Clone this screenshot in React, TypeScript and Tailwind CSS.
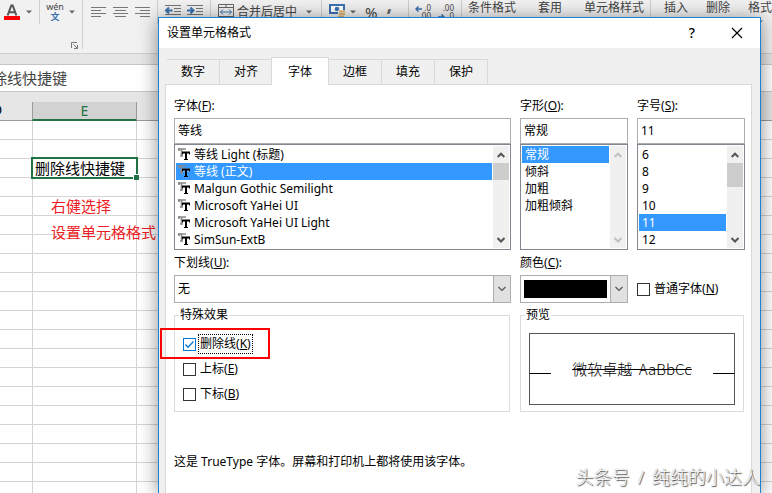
import React, { useState } from 'react';

const SHEET_ROWS = Array.from({ length: 20 }, (_, i) => i);
const TABS = ['数字', '对齐', '字体', '边框', '填充', '保护'];
const FONTS = [
  '等线 Light (标题)',
  '等线 (正文)',
  'Malgun Gothic Semilight',
  'Microsoft YaHei UI',
  'Microsoft YaHei UI Light',
  'SimSun-ExtB',
];
const STYLES = ['常规', '倾斜', '加粗', '加粗倾斜'];
const SIZES = ['6', '8', '9', '10', '11', '12'];

/* ---------- Ribbon icons ---------- */

const Caret = () => (
  <svg width="6" height="4" viewBox="0 0 6 4" className="shrink-0">
    <path d="M0 0.5h6L3 3.5z" fill="#666" />
  </svg>
);

const FontColorIcon = () => (
  <svg width="16" height="16" viewBox="0 0 16 16" className="shrink-0">
    <path d="M3.6 11.5 7.3 1.5h1.4l3.7 10M5 8.2h6" fill="none" stroke="#555" strokeWidth="2" />
    <rect y="12" width="16" height="4" fill="#f00" />
  </svg>
);

const PhoneticIcon = () => (
  <span className="flex w-4 shrink-0 flex-col items-center">
    <span className="text-[9px] leading-[10px] text-[#444]">wén</span>
    <span className="text-[9px] leading-[10px] font-bold text-[#3a72b0]">文</span>
  </span>
);

const AlignIcon = ({ short }: { short: 'left' | 'center' | 'right' }) => {
  const x = short === 'left' ? 0 : short === 'center' ? 2 : 5;
  const w = short === 'center' ? 11 : 10;
  return (
    <svg width="15" height="10" viewBox="0 0 15 10" className="shrink-0" fill="#777">
      <rect width="15" height="1" />
      <rect x={x} y="3" width={w} height="1" />
      <rect y="6" width="15" height="1" />
      <rect x={x} y="9" width={w} height="1" />
    </svg>
  );
};

const IndentIcon = ({ increase }: { increase?: boolean }) => (
  <svg width="16" height="12" viewBox="0 0 16 12" className="shrink-0">
    <path d="M0 .5h16M9 3.5h7M9 6.5h7M0 9.5h16" stroke="#777" />
    <path
      d={increase ? 'M0 5.5h6M3.5 2.5l3 3-3 3' : 'M1 5.5h6.5M4 2.5l-3 3 3 3'}
      fill="none"
      stroke="#3a72b0"
      strokeWidth="2"
    />
  </svg>
);

const MergeIcon = () => (
  <svg width="16" height="16" viewBox="0 0 16 16" className="shrink-0" fill="none">
    <path d="M.5.5h15v15H.5zM.5 3.5h15M.5 12.5h15M8 .5v3M8 12.5v3" stroke="#666" />
    <path d="M2.5 8h11M5 5.5 2.5 8 5 10.5M11 5.5 13.5 8 11 10.5" stroke="#3a72b0" />
  </svg>
);

const CurrencyIcon = () => (
  <svg width="16" height="16" viewBox="0 0 16 16" className="shrink-0">
    <rect x="1" y="1" width="14" height="8" fill="#fff" stroke="#3a72b0" strokeWidth="2" />
    <circle cx="8" cy="5" r="2.3" fill="#3a72b0" />
    <rect x="9" y="6" width="7" height="10" rx="1" fill="#f1f1f1" />
    <path d="M10 7.5h6M10 10h6M9 12.5h6M5 14.5h9" stroke="#e0b270" strokeWidth="1.8" />
  </svg>
);

const DecimalIcon = ({ decrease }: { decrease?: boolean }) => (
  <span className="relative flex w-4 shrink-0 flex-col items-end text-[8px] leading-[8px] text-[#444]">
    <span>{decrease ? '.00' : '.0'}</span>
    <span>{decrease ? '.0' : '.00'}</span>
    <svg
      width="7"
      height="6"
      viewBox="0 0 7 6"
      className={decrease ? 'absolute bottom-0 left-0' : 'absolute top-0.5 left-0'}
      fill="none"
      stroke="#3a72b0"
      strokeWidth="1.5"
    >
      <path d={decrease ? 'M0 3h6M3.5.5 6 3 3.5 5.5' : 'M1 3h6M3.5.5 1 3l2.5 2.5'} />
    </svg>
  </span>
);

const LauncherIcon = () => (
  <svg width="7" height="7" viewBox="0 0 7 7" fill="none" stroke="#777">
    <path d="M.5 6V.5H6M2.5 2.5 6 6M6.5 3v3.5H3" />
  </svg>
);

/* ---------- Spreadsheet in the background ---------- */

const Ribbon = () => (
  <div className="flex h-[54px] items-start overflow-hidden border-b border-[#cfcfcf] bg-[#f1f1f1] text-[12px] leading-4 whitespace-nowrap text-[#444]">
    <div className="flex h-[49px] w-[83px] shrink-0 flex-col justify-between border-r border-[#cfcfcf]">
      <div className="flex h-6">
        <div className="flex w-10 shrink-0 items-center gap-1.5 border-r border-[#cfcfcf] pl-1">
          <FontColorIcon />
          <Caret />
        </div>
        <div className="flex items-center gap-1.5 pl-[7px]">
          <PhoneticIcon />
          <Caret />
        </div>
      </div>
      <div className="self-end pr-1">
        <LauncherIcon />
      </div>
    </div>
    <div className="flex h-6 w-[75px] shrink-0 items-center gap-[7px] border-r border-[#cfcfcf] pl-2">
      <AlignIcon short="left" />
      <AlignIcon short="center" />
      <AlignIcon short="right" />
    </div>
    <div className="flex h-[22px] w-[53px] shrink-0 items-center gap-1.5 border-r border-[#cfcfcf] pl-[7px]">
      <IndentIcon />
      <IndentIcon increase />
    </div>
    <div className="flex h-6 w-[111px] shrink-0 items-center gap-[3px] border-r border-[#cfcfcf] pl-[7px]">
      <MergeIcon />
      <span className="mr-1.5">合并后居中</span>
      <Caret />
    </div>
    <div className="flex h-6 w-[87px] shrink-0 items-center gap-[5px] border-r border-[#cfcfcf] pl-[7px]">
      <CurrencyIcon />
      <Caret />
      <span className="ml-1 text-[15px]">%</span>
      <span className="ml-1 pb-4 text-[20px] font-bold text-[#666]">,</span>
    </div>
    <div className="flex h-6 w-[53px] shrink-0 items-center gap-[7px] border-r border-[#cfcfcf] pl-1.5">
      <DecimalIcon />
      <DecimalIcon decrease />
    </div>
    <div className="flex h-[49px] w-[189px] shrink-0 items-start border-r border-[#cfcfcf] pl-1.5">
      <span>条件格式</span>
      <span className="mx-2.5 w-12 text-center">
        套用
        <br />
        表格格式
      </span>
      <span>单元格样式</span>
    </div>
    <div className="flex shrink-0 items-start gap-[18px] pl-[13px]">
      <span>插入</span>
      <span>删除</span>
      <span className="flex flex-col items-center gap-1">
        格式
        <Caret />
      </span>
    </div>
  </div>
);

const Sheet = () => (
  <div>
    <Ribbon />
    <div className="bg-[#e6e6e6] pt-2.5">
      <div className="flex h-7 items-center overflow-hidden border-y border-[#c6c6c6] bg-white text-[15px] text-[#444]">
        <span className="-ml-[23px] whitespace-nowrap">删除线快捷键</span>
      </div>
    </div>
    <div className="flex h-[29px] items-end border-b border-[#9b9b9b] bg-[#e6e6e6] text-[14px]">
      <div className="w-8 shrink-0 overflow-hidden text-black">
        <span className="-ml-2">D</span>
      </div>
      <div className="-mb-px flex h-[19px] w-[105px] shrink-0 items-center justify-center border-x border-b-2 border-x-[#9b9b9b] border-b-[#217346] bg-[#d2d2d2] text-[#217346]">
        E
      </div>
    </div>
    <div className="relative bg-white">
      {SHEET_ROWS.map((row) => (
        <div key={row} className="flex h-[19px] border-b border-[#d4d4d4]">
          <div className="w-8 shrink-0" />
          <div className="relative w-[105px] shrink-0 border-x border-[#d4d4d4]">
            {row === 2 && (
              <div className="absolute -inset-0.5 z-10 flex items-center border-2 border-[#217346] bg-white pl-0.5 text-[15px] whitespace-nowrap text-black">
                删除线快捷键
                <span className="absolute -right-[3px] -bottom-[3px] h-[6px] w-[6px] border-t border-l border-white bg-[#217346]" />
              </div>
            )}
          </div>
        </div>
      ))}
      {/* Annotation floating over the cells */}
      <p className="absolute top-[72px] left-[51px] text-[15px] leading-[26px] whitespace-nowrap text-[#ed1c24]">
        右健选择
        <br />
        设置单元格格式
      </p>
    </div>
  </div>
);

/* ---------- Dialog parts ---------- */

const Chevron = ({ up, thin, color = '#555' }: { up?: boolean; thin?: boolean; color?: string }) => (
  <svg width="8" height="6" viewBox="0 0 8 6" fill="none" stroke={color} strokeWidth={thin ? 1.2 : 2}>
    <path d={up ? 'M.7 5 4 1.7 7.3 5' : 'M.5 1 4 4.5 7.5 1'} />
  </svg>
);

const TrueTypeIcon = () => (
  <svg width="12" height="13" viewBox="0 0 12 13" className="shrink-0" fill="none">
    <path d="M0 1h8M1 0v3M3.500 1v7M2 8h3" stroke="#888" strokeWidth="1.6" />
    <path d="M4 3h8v4H4z" fill="#fff" fillOpacity="0.3" />
    <path d="M4.5 6.500V4M11.5 6.500V4M6 11.5h4" stroke="#000" />
    <path d="M4 4.500h8M8 4v8" stroke="#000" strokeWidth="2" />
  </svg>
);

const Hotkey = ({ text, letter, colon }: { text: string; letter: string; colon?: boolean }) => (
  <>
    {text}(<span className="underline underline-offset-1">{letter}</span>){colon && ':'}
  </>
);

type ListProps = {
  label: string;
  items: string[];
  value: string;
  onPick: (item: string) => void;
  thumb?: 'small' | 'tall';
  icons?: boolean;
};

const ListBox: React.FC<ListProps> = ({ label, items, value, onPick, thumb, icons }) => (
  <div className="flex h-[106px] border border-[#828790] bg-white p-px">
    <ul role="listbox" aria-label={label} className="min-w-0 flex-1 pr-px">
      {items.map((item) => (
        <li
          key={item}
          role="option"
          aria-selected={item === value}
          onClick={() => onPick(item)}
          className={`flex h-[17px] items-center gap-1 whitespace-nowrap ${
            item === value ? 'bg-[#3399ff] text-white' : 'text-black'
          } ${icons ? 'pl-0.5' : 'pl-[3px]'}`}
        >
          {icons && <TrueTypeIcon />}
          {item}
        </li>
      ))}
    </ul>
    <div className="flex w-4 flex-col items-center bg-[#f0f0f0]">
      <span className="flex h-[17px] shrink-0 items-center">
        <Chevron up color={thumb ? '#555' : '#bfbfbf'} />
      </span>
      <span
        className={
          thumb === 'tall' ? 'h-6 w-full bg-[#cdcdcd]' : thumb === 'small' ? 'h-[17px] w-full bg-[#cdcdcd]' : ''
        }
      />
      <span className="mt-auto flex h-[17px] shrink-0 items-center">
        <Chevron color={thumb ? '#555' : '#bfbfbf'} />
      </span>
    </div>
  </div>
);

type PickerProps = Omit<ListProps, 'label'> & { id: string; text: string; letter: string };

const Picker: React.FC<PickerProps> = ({ id, text, letter, ...list }) => (
  <div className="min-w-0">
    <label htmlFor={id} className="mb-1 block h-4">
      <Hotkey text={text} letter={letter} colon />
    </label>
    <input
      id={id}
      value={list.value.replace(' (正文)', '')}
      readOnly
      className="block h-[26px] w-full border border-[#abadb3] bg-white px-[3px] pb-0.5 outline-none"
    />
    <ListBox label={text} {...list} />
  </div>
);

const Check = ({
  children,
  checked,
  onChange,
  focused,
}: {
  children: React.ReactNode;
  checked: boolean;
  onChange: (checked: boolean) => void;
  focused?: boolean;
}) => (
  <label className="flex h-5 items-center gap-0.5 whitespace-nowrap">
    <span className="relative flex">
      <input
        type="checkbox"
        checked={checked}
        onChange={(e) => onChange(e.target.checked)}
        className="h-[13px] w-[13px] appearance-none border border-[#333] bg-white outline-none checked:border-[#0078d7]"
      />
      {checked && (
        <svg width="13" height="13" viewBox="0 0 13 13" className="pointer-events-none absolute inset-0">
          <path d="M2.5 6.5 5 9.2 10.5 3.5" fill="none" stroke="#0078d7" strokeWidth="1.3" />
        </svg>
      )}
    </span>
    <span
      className={
        focused ? 'border border-dotted border-black px-px leading-[18px]' : 'border border-transparent px-px'
      }
    >
      {children}
    </span>
  </label>
);

const FormatDialog = () => {
  const [tab, setTab] = useState('字体');
  const [font, setFont] = useState('等线 (正文)');
  const [style, setStyle] = useState('常规');
  const [size, setSize] = useState('11');
  const [plain, setPlain] = useState(false);
  const [strike, setStrike] = useState(true);
  const [sup, setSup] = useState(false);
  const [sub, setSub] = useState(false);

  return (
    <div
      role="dialog"
      aria-label="设置单元格格式"
      className="absolute top-[17px] right-[11px] bottom-0 left-[158px] z-20 flex flex-col border border-b-0 border-[#1883d7] bg-[#f0f0f0] text-[12px] leading-4 text-black shadow-[0_2px_18px_rgba(0,0,0,0.45)]"
    >
      {/* Title bar */}
      <div className="flex h-[30px] shrink-0 items-center bg-white pr-[17px] pl-2">
        <h1 className="flex-1">设置单元格格式</h1>
        <button aria-label="帮助" className="mr-9 text-[14px] font-medium">
          ?
        </button>
        <button aria-label="关闭">
          <svg width="12" height="12" viewBox="0 0 12 12" stroke="#000" strokeWidth="1.2">
            <path d="M1 1l10 10M11 1 1 11" />
          </svg>
        </button>
      </div>

      <div className="flex flex-1 flex-col pr-2 pl-1.5">
        {/* Tabs */}
        <div role="tablist" className="flex h-9 shrink-0 items-end pl-0.5">
          {TABS.map((name) => (
            <button
              key={name}
              role="tab"
              aria-selected={tab === name}
              onClick={() => setTab(name)}
              className={
                tab === name
                  ? 'relative z-10 -mb-px -ml-0.5 h-7 w-[58px] border border-b-0 border-[#d9d9d9] bg-white'
                  : 'h-[25px] border-t border-r border-[#d9d9d9] px-3.5'
              }
            >
              {name}
            </button>
          ))}
        </div>

        {/* Font panel */}
        <div className="flex-1 border border-b-0 border-[#d9d9d9] bg-white pt-[13px] pr-1.5 pl-2">
          <div className="grid grid-cols-[337fr_108fr_108fr] gap-x-[9px]">
            <Picker id="font" text="字体" letter="F" items={FONTS} value={font} onPick={setFont} thumb="small" icons />
            <Picker id="style" text="字形" letter="O" items={STYLES} value={style} onPick={setStyle} />
            <Picker id="size" text="字号" letter="S" items={SIZES} value={size} onPick={setSize} thumb="tall" />

            <div className="mt-[5px]">
              <label htmlFor="underline" className="mb-1 block h-4">
                <Hotkey text="下划线" letter="U" colon />
              </label>
              <div className="relative">
                <select
                  id="underline"
                  className="block h-7 w-full appearance-none border border-[#abadb3] bg-white px-[3px] outline-none"
                >
                  <option>无</option>
                  <option>单下划线</option>
                  <option>双下划线</option>
                </select>
                <span className="pointer-events-none absolute inset-y-0 right-0 flex w-[18px] items-center justify-center border border-[#abadb3] bg-[#e1e1e1]">
                  <Chevron thin />
                </span>
              </div>
            </div>
            <div className="mt-[5px]">
              <label htmlFor="color" className="mb-1 block h-4">
                <Hotkey text="颜色" letter="C" colon />
              </label>
              <div className="relative">
                <select
                  id="color"
                  className="block h-7 w-full appearance-none border border-[#abadb3] bg-white outline-none"
                >
                  <option aria-label="黑色" />
                </select>
                <span className="pointer-events-none absolute inset-y-[5px] right-[21px] left-1 bg-black" />
                <span className="pointer-events-none absolute inset-y-0 right-0 flex w-[18px] items-center justify-center border border-[#abadb3] bg-[#e1e1e1]">
                  <Chevron thin />
                </span>
              </div>
            </div>
            <div className="self-end pb-1">
              <Check checked={plain} onChange={setPlain}>
                <Hotkey text="普通字体" letter="N" />
              </Check>
            </div>

            <fieldset className="mt-1 mr-px h-[105px] border border-[#dcdcdc] pl-2">
              <legend className="-ml-1 h-4 px-px">特殊效果</legend>
              <div className="relative flex flex-col gap-[5px] pt-[11px]">
                <Check checked={strike} onChange={setStrike} focused>
                  <Hotkey text="删除线" letter="K" />
                </Check>
                <Check checked={sup} onChange={setSup}>
                  <Hotkey text="上标" letter="E" />
                </Check>
                <Check checked={sub} onChange={setSub}>
                  <Hotkey text="下标" letter="B" />
                </Check>
                {/* Red marker around the strikethrough option */}
                <span className="pointer-events-none absolute top-[5px] -left-[23px] h-[31px] w-[110px] border-2 border-[#f00]" />
              </div>
            </fieldset>
            <fieldset className="col-span-2 mt-1 mr-px h-[105px] min-w-0 border border-[#dcdcdc] px-2">
              <legend className="-ml-1 h-4 px-px">预览</legend>
              <div className="pt-2.5">
                <div className="flex h-[72px] items-center justify-between border border-[#555]">
                  <span className="mt-2 h-px w-[21px] bg-black" />
                  <span
                    className={`font-['Noto_Sans_CJK_SC',sans-serif] text-[15px] font-light whitespace-pre ${
                      strike ? 'line-through' : ''
                    }`}
                  >
                    {'微软卓越  AaBbCc'}
                  </span>
                  <span className="mt-2 h-px w-[21px] bg-black" />
                </div>
              </div>
            </fieldset>
          </div>
          <p className="mt-[42px]">这是 TrueType 字体。屏幕和打印机上都将使用该字体。</p>
        </div>
      </div>
    </div>
  );
};

const App: React.FC = () => {
  return (
    <div className="relative h-screen overflow-hidden bg-white font-['Noto_Sans','Noto_Sans_CJK_SC',sans-serif]">
      <Sheet />
      <FormatDialog />
      <p className="absolute right-3 bottom-1 z-30 flex gap-2 text-[18px] leading-6 font-light whitespace-nowrap text-white [text-shadow:1px_1px_1px_#444,0_0_1px_#888]">
        <span>头条号</span>
        <span>/</span>
        <span>纯纯的小达人</span>
      </p>
    </div>
  );
};

export default App;
